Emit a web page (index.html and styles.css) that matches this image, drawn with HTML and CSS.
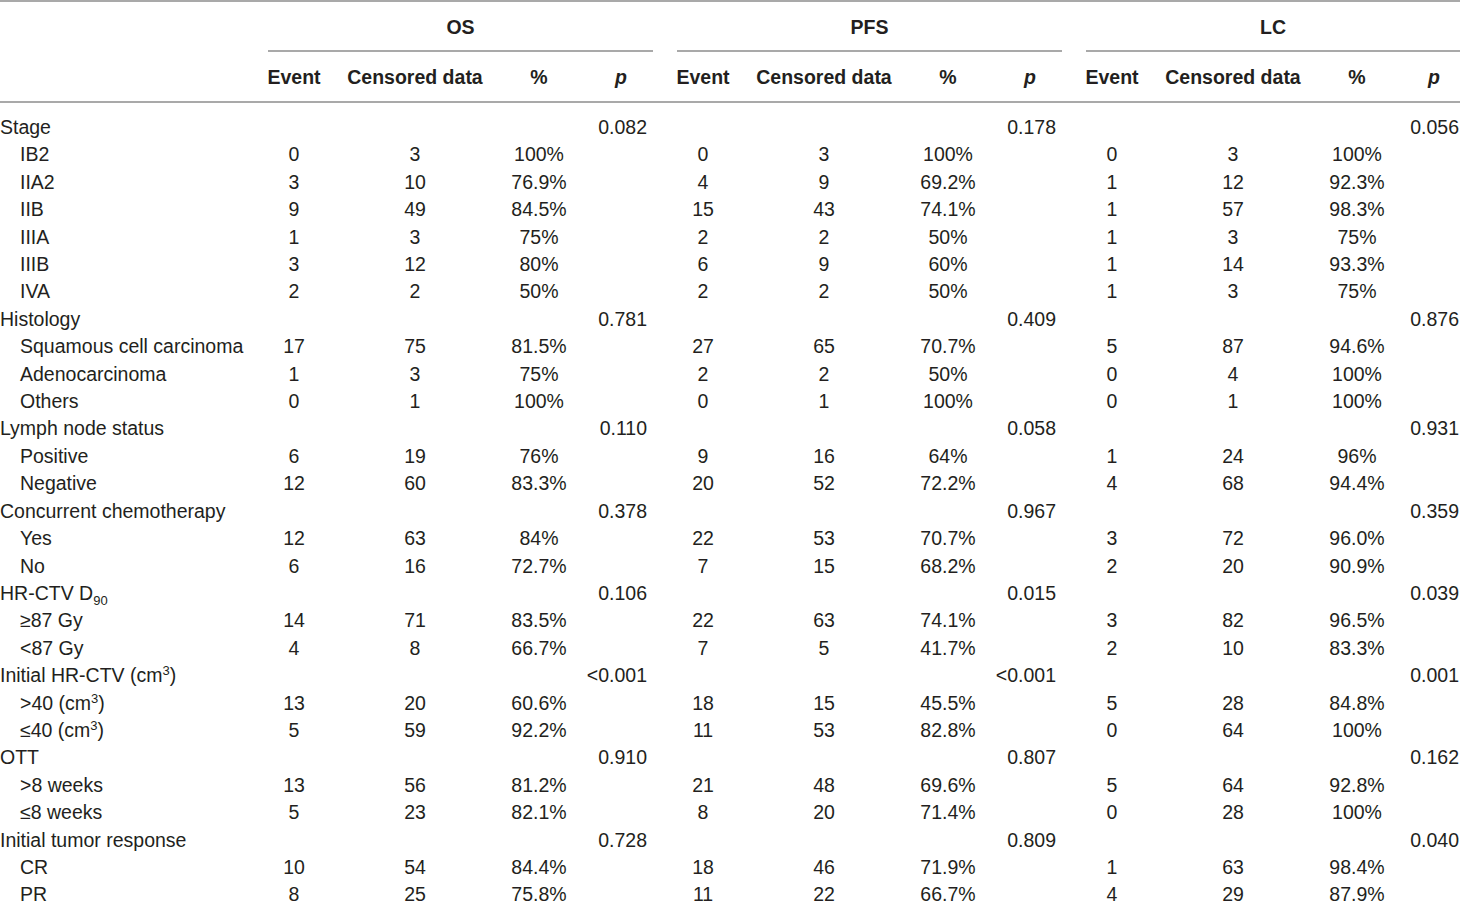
FILE: index.html
```html
<!DOCTYPE html>
<html lang="en">
  <head>
    <meta charset="UTF-8" />
    <meta name="viewport" content="width=device-width, initial-scale=1.0" />
    <title>Survival outcomes by clinical factors</title>
    <link rel="stylesheet" href="styles.css">
  </head>
  <body>
    <table class="results">
      <colgroup>
        <col class="c-label" />
        <col class="c-ev" /><col class="c-cen" /><col class="c-pct" /><col class="c-p" />
        <col class="c-ev" /><col class="c-cen" /><col class="c-pct" /><col class="c-p" />
        <col class="c-ev" /><col class="c-cen" /><col class="c-pct" /><col class="c-p-last" />
      </colgroup>
      <thead>
        <tr class="groups">
          <th rowspan="2" class="corner"></th>
          <th colspan="4"><div class="group">OS</div></th>
          <th colspan="4"><div class="group">PFS</div></th>
          <th colspan="4"><div class="group last">LC</div></th>
        </tr>
        <tr class="sub">
          <th>Event</th><th>Censored data</th><th>%</th><th class="ph"><i>p</i></th>
          <th>Event</th><th>Censored data</th><th>%</th><th class="ph"><i>p</i></th>
          <th>Event</th><th>Censored data</th><th>%</th><th class="ph last"><i>p</i></th>
        </tr>
      </thead>
      <tbody>
        <tr class="first"><td>Stage</td><td></td><td></td><td></td><td class="p">0.082</td><td></td><td></td><td></td><td class="p">0.178</td><td></td><td></td><td></td><td class="p last">0.056</td></tr>
        <tr><td class="ind">IB2</td><td>0</td><td>3</td><td>100%</td><td></td><td>0</td><td>3</td><td>100%</td><td></td><td>0</td><td>3</td><td>100%</td><td></td></tr>
        <tr><td class="ind">IIA2</td><td>3</td><td>10</td><td>76.9%</td><td></td><td>4</td><td>9</td><td>69.2%</td><td></td><td>1</td><td>12</td><td>92.3%</td><td></td></tr>
        <tr><td class="ind">IIB</td><td>9</td><td>49</td><td>84.5%</td><td></td><td>15</td><td>43</td><td>74.1%</td><td></td><td>1</td><td>57</td><td>98.3%</td><td></td></tr>
        <tr><td class="ind">IIIA</td><td>1</td><td>3</td><td>75%</td><td></td><td>2</td><td>2</td><td>50%</td><td></td><td>1</td><td>3</td><td>75%</td><td></td></tr>
        <tr><td class="ind">IIIB</td><td>3</td><td>12</td><td>80%</td><td></td><td>6</td><td>9</td><td>60%</td><td></td><td>1</td><td>14</td><td>93.3%</td><td></td></tr>
        <tr><td class="ind">IVA</td><td>2</td><td>2</td><td>50%</td><td></td><td>2</td><td>2</td><td>50%</td><td></td><td>1</td><td>3</td><td>75%</td><td></td></tr>
        <tr><td>Histology</td><td></td><td></td><td></td><td class="p">0.781</td><td></td><td></td><td></td><td class="p">0.409</td><td></td><td></td><td></td><td class="p last">0.876</td></tr>
        <tr><td class="ind">Squamous cell carcinoma</td><td>17</td><td>75</td><td>81.5%</td><td></td><td>27</td><td>65</td><td>70.7%</td><td></td><td>5</td><td>87</td><td>94.6%</td><td></td></tr>
        <tr><td class="ind">Adenocarcinoma</td><td>1</td><td>3</td><td>75%</td><td></td><td>2</td><td>2</td><td>50%</td><td></td><td>0</td><td>4</td><td>100%</td><td></td></tr>
        <tr><td class="ind">Others</td><td>0</td><td>1</td><td>100%</td><td></td><td>0</td><td>1</td><td>100%</td><td></td><td>0</td><td>1</td><td>100%</td><td></td></tr>
        <tr><td>Lymph node status</td><td></td><td></td><td></td><td class="p">0.110</td><td></td><td></td><td></td><td class="p">0.058</td><td></td><td></td><td></td><td class="p last">0.931</td></tr>
        <tr><td class="ind">Positive</td><td>6</td><td>19</td><td>76%</td><td></td><td>9</td><td>16</td><td>64%</td><td></td><td>1</td><td>24</td><td>96%</td><td></td></tr>
        <tr><td class="ind">Negative</td><td>12</td><td>60</td><td>83.3%</td><td></td><td>20</td><td>52</td><td>72.2%</td><td></td><td>4</td><td>68</td><td>94.4%</td><td></td></tr>
        <tr><td>Concurrent chemotherapy</td><td></td><td></td><td></td><td class="p">0.378</td><td></td><td></td><td></td><td class="p">0.967</td><td></td><td></td><td></td><td class="p last">0.359</td></tr>
        <tr><td class="ind">Yes</td><td>12</td><td>63</td><td>84%</td><td></td><td>22</td><td>53</td><td>70.7%</td><td></td><td>3</td><td>72</td><td>96.0%</td><td></td></tr>
        <tr><td class="ind">No</td><td>6</td><td>16</td><td>72.7%</td><td></td><td>7</td><td>15</td><td>68.2%</td><td></td><td>2</td><td>20</td><td>90.9%</td><td></td></tr>
        <tr><td>HR-CTV D<sub>90</sub></td><td></td><td></td><td></td><td class="p">0.106</td><td></td><td></td><td></td><td class="p">0.015</td><td></td><td></td><td></td><td class="p last">0.039</td></tr>
        <tr><td class="ind">&ge;87 Gy</td><td>14</td><td>71</td><td>83.5%</td><td></td><td>22</td><td>63</td><td>74.1%</td><td></td><td>3</td><td>82</td><td>96.5%</td><td></td></tr>
        <tr><td class="ind">&lt;87 Gy</td><td>4</td><td>8</td><td>66.7%</td><td></td><td>7</td><td>5</td><td>41.7%</td><td></td><td>2</td><td>10</td><td>83.3%</td><td></td></tr>
        <tr><td>Initial HR-CTV (cm<sup>3</sup>)</td><td></td><td></td><td></td><td class="p">&lt;0.001</td><td></td><td></td><td></td><td class="p">&lt;0.001</td><td></td><td></td><td></td><td class="p last">0.001</td></tr>
        <tr><td class="ind">&gt;40 (cm<sup>3</sup>)</td><td>13</td><td>20</td><td>60.6%</td><td></td><td>18</td><td>15</td><td>45.5%</td><td></td><td>5</td><td>28</td><td>84.8%</td><td></td></tr>
        <tr><td class="ind">&le;40 (cm<sup>3</sup>)</td><td>5</td><td>59</td><td>92.2%</td><td></td><td>11</td><td>53</td><td>82.8%</td><td></td><td>0</td><td>64</td><td>100%</td><td></td></tr>
        <tr><td>OTT</td><td></td><td></td><td></td><td class="p">0.910</td><td></td><td></td><td></td><td class="p">0.807</td><td></td><td></td><td></td><td class="p last">0.162</td></tr>
        <tr><td class="ind">&gt;8 weeks</td><td>13</td><td>56</td><td>81.2%</td><td></td><td>21</td><td>48</td><td>69.6%</td><td></td><td>5</td><td>64</td><td>92.8%</td><td></td></tr>
        <tr><td class="ind">&le;8 weeks</td><td>5</td><td>23</td><td>82.1%</td><td></td><td>8</td><td>20</td><td>71.4%</td><td></td><td>0</td><td>28</td><td>100%</td><td></td></tr>
        <tr><td>Initial tumor response</td><td></td><td></td><td></td><td class="p">0.728</td><td></td><td></td><td></td><td class="p">0.809</td><td></td><td></td><td></td><td class="p last">0.040</td></tr>
        <tr><td class="ind">CR</td><td>10</td><td>54</td><td>84.4%</td><td></td><td>18</td><td>46</td><td>71.9%</td><td></td><td>1</td><td>63</td><td>98.4%</td><td></td></tr>
        <tr><td class="ind">PR</td><td>8</td><td>25</td><td>75.8%</td><td></td><td>11</td><td>22</td><td>66.7%</td><td></td><td>4</td><td>29</td><td>87.9%</td><td></td></tr>
      </tbody>
    </table>
  </body>
</html>
```

FILE: styles.css
```css
body {
  margin: 0;
  background-color: white;
  font-family: "Liberation Sans", Arial, sans-serif;
  color: #231f20;
}
.results {
  width: 1460px;
  table-layout: fixed;
  border-collapse: collapse;
  border-top: 2px solid #a9a9a9;
  font-size: 19.5px;
}
.c-label {
  width: 258px;
}
.c-ev {
  width: 72px;
}
.c-cen {
  width: 170px;
}
.c-pct {
  width: 78px;
}
.c-p {
  width: 89px;
}
.c-p-last {
  width: 64px;
}
th {
  font-weight: bold;
  padding: 0;
  text-align: center;
}
th.corner {
  border-bottom: 2px solid #a9a9a9;
}
.groups th {
  vertical-align: top;
}
.group {
  margin: 0 14px 0 10px;
  padding-top: 3px;
  line-height: 45px;
  border-bottom: 2px solid #a9a9a9;
}
.group.last {
  margin-right: 0;
}
.sub th {
  padding-top: 1px;
  line-height: 48px;
  border-bottom: 2px solid #a9a9a9;
}
.sub th.ph {
  text-align: right;
  padding-right: 40px;
}
.sub th.ph.last {
  padding-right: 20px;
}
td {
  padding: 0;
  line-height: 27.4px;
  text-align: center;
  white-space: nowrap;
}
td:first-child {
  text-align: left;
}
td.ind {
  padding-left: 20px;
}
td.p {
  text-align: right;
  padding-right: 20px;
}
td.p.last {
  padding-right: 1px;
}
tr.first td {
  padding-top: 11px;
}
sup,
sub {
  font-size: 13px;
  line-height: 0;
}
```
